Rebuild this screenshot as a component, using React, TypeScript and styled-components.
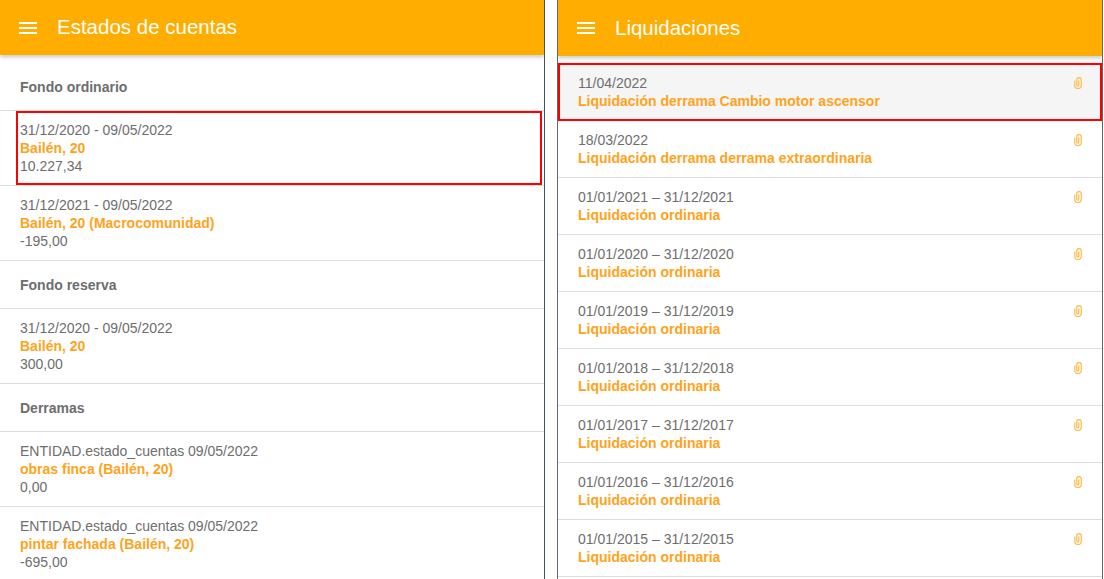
import React from "react";
import styled, { createGlobalStyle } from "styled-components";

const Global = createGlobalStyle`
  html, body { margin: 0; padding: 0; background: #fff; overflow: hidden; }
`;

const Page = styled.div`
  position: relative;
  width: 1104px;
  height: 579px;
  display: flex;
  overflow: hidden;
`;

const Panel = styled.section<{ $width: number; $edge?: boolean }>`
  width: ${(p) => p.$width}px;
  flex: none;
  height: 579px;
  overflow: hidden;
  border-right: ${(p) => (p.$edge ? "1px solid #666" : "none")};
`;

const Gutter = styled.div`
  width: 14px;
  flex: none;
  box-sizing: border-box;
  border-left: 1px solid #3f5468;
  border-right: 1px solid #666;
`;

const Header = styled.header<{ $height: number }>`
  height: ${(p) => p.$height}px;
  background: #ffad00;
  box-shadow: 0 2px 4px rgba(0, 0, 0, 0.22);
  display: flex;
  align-items: center;
  padding-left: 19px;
  color: #fff;
`;

const Title = styled.h1<{ $lift?: boolean }>`
  margin: 0 0 ${(p) => (p.$lift ? "2px" : "0")} 20px;
  font: 400 20.5px "Liberation Sans", Arial, sans-serif;
`;

const SectionTitle = styled.div`
  height: 48px;
  box-sizing: border-box;
  padding: 0 20px;
  display: flex;
  align-items: center;
  border-bottom: 1px solid #ddd;
  font: 700 14px "Liberation Sans", Arial, sans-serif;
  color: #6e6e6e;
`;

const Body = styled.div<{ $top: number }>`
  padding-top: ${(p) => p.$top}px;
`;

const Row = styled.div<{ $height: number; $selected?: boolean }>`
  position: relative;
  height: ${(p) => p.$height}px;
  box-sizing: border-box;
  padding: ${(p) => (p.$selected ? "13px" : "10px")} 20px 0;
  border-bottom: ${(p) => (p.$selected ? "none" : "1px solid #ddd")};
  background: ${(p) => (p.$selected ? "#f5f5f5" : "#fff")};
  font: 400 14px/18px "Liberation Sans", Arial, sans-serif;
  color: #6e6e6e;
`;

const Name = styled.div`
  font-weight: 700;
  color: #ffa31a;
`;

const Highlight = styled.div<{ $left: number; $top: number; $width: number; $height: number }>`
  position: absolute;
  left: ${(p) => p.$left}px;
  top: ${(p) => p.$top}px;
  width: ${(p) => p.$width}px;
  height: ${(p) => p.$height}px;
  box-sizing: border-box;
  border: 2px solid #f00;
  pointer-events: none;
`;

const Clip = styled.svg<{ $top: number }>`
  position: absolute;
  right: 20px;
  top: ${(p) => p.$top}px;
  width: 8px;
  height: 12px;
  fill: none;
  stroke: #ffbd4d;
  stroke-width: 1.25;
`;

const Menu = () => (
  <svg width="18" height="12" viewBox="0 0 18 12" fill="#fff">
    <rect y="0" width="18" height="2" />
    <rect y="5" width="18" height="2" />
    <rect y="10" width="18" height="2" />
  </svg>
);

const PaperClip = ({ top }: { top: number }) => (
  <Clip viewBox="0 0 8 12" $top={top}>
    <path d="M.75 3.5V8.25a3.25 3.25 0 0 0 6.5 0V2.75a2.25 2.25 0 0 0-4.5 0V8a1 1 0 0 0 2 0V3.5" />
  </Clip>
);

const ordinary = [
  ["31/12/2020 - 09/05/2022", "Bailén, 20", "10.227,34"],
  ["31/12/2021 - 09/05/2022", "Bailén, 20 (Macrocomunidad)", "-195,00"],
];

const liquidaciones = [
  ["18/03/2022", "Liquidación derrama derrama extraordinaria"],
  ["01/01/2021 – 31/12/2021", "Liquidación ordinaria"],
  ["01/01/2020 – 31/12/2020", "Liquidación ordinaria"],
  ["01/01/2019 – 31/12/2019", "Liquidación ordinaria"],
  ["01/01/2018 – 31/12/2018", "Liquidación ordinaria"],
  ["01/01/2017 – 31/12/2017", "Liquidación ordinaria"],
  ["01/01/2016 – 31/12/2016", "Liquidación ordinaria"],
  ["01/01/2015 – 31/12/2015", "Liquidación ordinaria"],
];

export default function App() {
  return (
    <Page>
      <Global />
      <Panel $width={544}>
        <Header $height={55}>
          <Menu />
          <Title $lift>Estados de cuentas</Title>
        </Header>
        <Body $top={8}>
          <SectionTitle>Fondo ordinario</SectionTitle>
          {ordinary.map(([d, n, v]) => (
            <Row key={d} $height={75}>
              {d}
              <Name>{n}</Name>
              {v}
            </Row>
          ))}
          <SectionTitle>Fondo reserva</SectionTitle>
          <Row $height={75}>
            31/12/2020 - 09/05/2022
            <Name>Bailén, 20</Name>
            300,00
          </Row>
          <SectionTitle>Derramas</SectionTitle>
          <Row $height={75}>
            ENTIDAD.estado_cuentas 09/05/2022
            <Name>obras finca (Bailén, 20)</Name>
            0,00
          </Row>
          <Row $height={75}>
            ENTIDAD.estado_cuentas 09/05/2022
            <Name>pintar fachada (Bailén, 20)</Name>
            -695,00
          </Row>
        </Body>
      </Panel>
      <Gutter />
      <Panel $width={544} $edge>
        <Header $height={56}>
          <Menu />
          <Title>Liquidaciones</Title>
        </Header>
        <Body $top={5}>
          <Row $height={60} $selected>
            11/04/2022
            <Name>Liquidación derrama Cambio motor ascensor</Name>
            <PaperClip top={16} />
          </Row>
          {liquidaciones.map(([d, n]) => (
            <Row key={d} $height={57}>
              {d}
              <Name>{n}</Name>
              <PaperClip top={13} />
            </Row>
          ))}
        </Body>
      </Panel>
      <Highlight $left={16} $top={111} $width={526} $height={74} />
      <Highlight $left={558} $top={63} $width={544} $height={58} />
    </Page>
  );
}
